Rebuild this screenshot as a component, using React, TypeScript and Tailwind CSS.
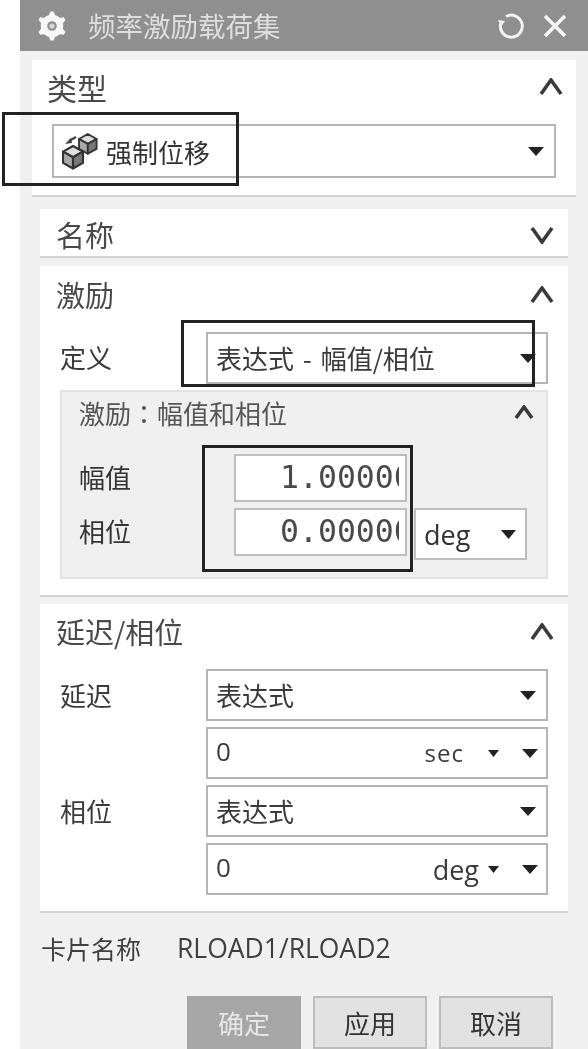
const FONT = "font-['Noto_Sans_CJK_SC','Noto_Sans',sans-serif]";

function Chevron({ up = true, w = 24, h = 18 }: { up?: boolean; w?: number; h?: number }) {
  return (
    <svg width={w} height={h} viewBox={`0 0 ${w} ${h}`} fill="none" className="shrink-0">
      <path
        d={up ? `M2 ${h - 2} L${w / 2} 2 L${w - 2} ${h - 2}` : `M2 2 L${w / 2} ${h - 2} L${w - 2} 2`}
        stroke="#3a3a3a"
        strokeWidth="3.6"
      />
    </svg>
  );
}

function Tri({ w = 16, h = 9 }: { w?: number; h?: number }) {
  return (
    <svg width={w} height={h} viewBox={`0 0 ${w} ${h}`} className="shrink-0">
      <path d={`M0 0 H${w} L${w / 2} ${h} Z`} fill="#222" />
    </svg>
  );
}

function Gear() {
  return (
    <svg width="30" height="30" viewBox="-15 -15 30 30" className="shrink-0">
      {[0, 60, 120, 180, 240, 300].map((a) => (
        <path key={a} d="M-3.4 -10 L-1.6 -14.6 H1.6 L3.4 -10 Z" fill="#f6f6f6" transform={`rotate(${a})`} />
      ))}
      <circle r="8" fill="none" stroke="#f6f6f6" strokeWidth="6.4" />
      <circle r="2.6" fill="#d6d6d6" />
    </svg>
  );
}

function Cube({ x, y, s }: { x: number; y: number; s: number }) {
  return (
    <g transform={`translate(${x} ${y}) scale(${s})`}>
      <path d="M8 0 L16 4.5 L8 9 L0 4.5 Z" fill="#dedede" stroke="#333" strokeWidth="1.7" strokeLinejoin="round" />
      <path d="M0 4.5 L8 9 V18 L0 13.5 Z" fill="#a8a8a8" stroke="#333" strokeWidth="1.7" strokeLinejoin="round" />
      <path d="M16 4.5 L8 9 V18 L16 13.5 Z" fill="#777" stroke="#333" strokeWidth="1.7" strokeLinejoin="round" />
    </g>
  );
}

function CubesIcon() {
  return (
    <svg width="36" height="38" viewBox="0 0 36 38" className="shrink-0">
      <path d="M7 9 L14 5" stroke="#444" strokeWidth="2.4" />
      <path d="M3 12 L9 6 L10 11 Z" fill="#444" />
      <Cube x={17} y={2} s={1.1} />
      <Cube x={1} y={14} s={1.25} />
    </svg>
  );
}

function Select({ children, className = "" }: { children: React.ReactNode; className?: string }) {
  return (
    <div className={`flex items-center justify-between border-2 border-[#b4b4b4] bg-white ${className}`}>
      {children}
    </div>
  );
}

function ExprRow({ text, className = "" }: { text: string; className?: string }) {
  return (
    <Select className={`h-[52px] pl-[8px] pr-[10px] text-[26px] text-[#3a3a3a] ${className}`}>
      <span className="mb-[2px] whitespace-nowrap [word-spacing:3px]">{text}</span>
      <Tri />
    </Select>
  );
}

function UnitRow({ unit, unitClass }: { unit: string; unitClass: string }) {
  return (
    <div className="flex h-[52px] items-center border-2 border-[#b4b4b4] bg-white pl-[8px] pr-[8px] text-[#3a3a3a]">
      <span className="mb-[5px] font-['Open_Sans',sans-serif] text-[26px] leading-none">0</span>
      <span className={`ml-auto whitespace-nowrap font-['Open_Sans',sans-serif] leading-none ${unitClass}`}>{unit}</span>
      <Tri w={11} h={7} />
      <span className="w-[23px]" />
      <Tri />
    </div>
  );
}

function NumField({ value, className = "" }: { value: string; className?: string }) {
  return (
    <div className={`flex h-[48px] w-[173px] items-center border-2 border-[#bdbdbd] bg-white pl-[44px] pr-[6px] ${className}`}>
      <div className="flex-1 overflow-hidden whitespace-nowrap font-['DejaVu_Sans_Mono',monospace] text-[31.5px] leading-none text-[#4a4a4a]">
        {value}
      </div>
    </div>
  );
}

function Button({ label, primary = false }: { label: string; primary?: boolean }) {
  return (
    <div
      className={`flex h-[53px] w-[114px] items-center justify-center border-2 text-[26px] ${
        primary ? "border-[#a6a6a6] bg-[#a6a6a6] text-[#e6e6e6]" : "border-[#bcbcbc] bg-[#e1e1e1] text-[#333]"
      }`}
    >
      {label}
    </div>
  );
}

export default function App() {
  return (
    <div className={`relative h-[1049px] w-[588px] overflow-hidden bg-white ${FONT}`}>
      <div className="ml-5 flex h-full flex-col bg-[#f0f0f0] blur-[0.7px]">
        {/* title bar */}
        <div className="flex h-[51px] shrink-0 items-center bg-[#8f8f8f] pl-[17px] pr-[21px]">
          <Gear />
          <span className="ml-[21px] text-[27.5px] leading-none text-[#dedede]">频率激励载荷集</span>
          <svg width="28" height="28" viewBox="0 0 28 28" fill="none" className="ml-auto">
            <path d="M9 4.5 A11 11 0 1 1 3.5 12" stroke="#f2f2f2" strokeWidth="3" />
            <path d="M1 8 L8 9 L4 15 Z" fill="#f2f2f2" />
          </svg>
          <svg width="24" height="24" viewBox="0 0 24 24" fill="none" className="ml-[18px]">
            <path d="M2 2 L22 22 M22 2 L2 22" stroke="#f6f6f6" strokeWidth="3.6" />
          </svg>
        </div>

        <div className="flex flex-1 flex-col px-3 pt-[9px]">
          {/* 类型 */}
          <div className="h-[137px] border-b-2 border-[#d2d2d2] bg-white px-5">
            <div className="flex h-[64px] items-center justify-between pb-[10px] text-[30px] text-[#4a4a4a]">
              <span className="-ml-[5px]">类型</span>
              <span className="-mr-[7px]">
                <Chevron />
              </span>
            </div>
            <Select className="h-[54px] pl-[8px] pr-[10px]">
              <span className="flex items-center gap-[8px] text-[26px] text-[#333]">
                <CubesIcon />
                强制位移
              </span>
              <Tri />
            </Select>
          </div>

          <div className="mx-2 mt-3 flex flex-col">
            {/* 名称 */}
            <div className="flex h-[49px] items-center justify-between border-b-2 border-[#d2d2d2] bg-white pl-4 pr-[14px] pt-[4px] text-[29px] text-[#4a4a4a]">
              <span>名称</span>
              <Chevron up={false} />
            </div>

            {/* 激励 */}
            <div className="mt-[8px] h-[331px] border-b-2 border-[#d2d2d2] bg-white px-5">
              <div className="flex h-[66px] items-center justify-between pb-[8px] text-[29px] text-[#4a4a4a]">
                <span className="-ml-1">激励</span>
                <span className="mr-[-6px]">
                  <Chevron />
                </span>
              </div>
              <div className="flex items-center">
                <span className="mb-[3px] w-[146px] text-[26px] text-[#3a3a3a]">定义</span>
                <ExprRow text="表达式 - 幅值/相位" className="flex-1" />
              </div>
              <div className="mt-[6px] h-[189px] border-2 border-[#e2e2e2] bg-[#efefef] pl-[17px] pr-[12px]">
                <div className="flex h-[44px] items-center justify-between pb-[4px] text-[26px] text-[#555]">
                  <span>
                    激励
                    <span className="font-['Noto_Sans_CJK_TC',sans-serif]">：</span>
                    幅值和相位
                  </span>
                  <Chevron w={20} h={15} />
                </div>
                <div className="mt-[18px] flex items-center text-[26px] text-[#333]">
                  <span className="mb-[3px] w-[155px]">幅值</span>
                  <NumField value="1.00000" />
                </div>
                <div className="mt-[6px] flex items-start text-[26px] text-[#333]">
                  <span className="w-[155px] pt-[3px]">相位</span>
                  <NumField value="0.00000" />
                  <div className="ml-[7px] flex h-[52px] w-[113px] items-center justify-between border-2 border-[#bdbdbd] bg-white pl-[8px] pr-[9px]">
                    <span className="font-['Open_Sans',sans-serif] text-[27px] leading-none text-[#333]">deg</span>
                    <Tri w={15} h={9} />
                  </div>
                </div>
              </div>
            </div>

            {/* 延迟/相位 */}
            <div className="mt-[7px] h-[309px] border-b-2 border-[#d2d2d2] bg-white px-5">
              <div className="flex h-[64px] items-center justify-between pb-[8px] text-[29px] text-[#4a4a4a]">
                <span className="-ml-1">延迟/相位</span>
                <span className="mr-[-6px]">
                  <Chevron />
                </span>
              </div>
              <div className="mt-px grid grid-cols-[146px_1fr] items-center gap-y-[6px] text-[26px] text-[#3a3a3a]">
                <span className="mb-[2px]">延迟</span>
                <ExprRow text="表达式" />
                <span />
                <UnitRow unit="sec" unitClass="mr-[24px] text-[24px] tracking-[1px]" />
                <span className="mb-[2px]">相位</span>
                <ExprRow text="表达式" />
                <span />
                <UnitRow unit="deg" unitClass="mr-[9px] text-[27px]" />
              </div>
            </div>
          </div>

          {/* footer */}
          <div className="mt-[17px] ml-[9px] flex items-center text-[#3f3f3f]">
            <span className="text-[25px] leading-[36px]">卡片名称</span>
            <span className="ml-[36px] font-['Open_Sans',sans-serif] text-[26.5px] leading-[36px]">RLOAD1/RLOAD2</span>
          </div>
          <div className="mt-[30px] flex gap-[12px] pl-[155px]">
            <Button label="确定" primary />
            <Button label="应用" />
            <Button label="取消" />
          </div>
        </div>
      </div>

      {/* annotation frames */}
      <div className="absolute left-[2px] top-[112px] h-[74px] w-[237px] border-[3px] border-[#222]" />
      <div className="absolute left-[181px] top-[320px] h-[67px] w-[354px] border-[3px] border-[#222]" />
      <div className="absolute left-[202px] top-[445px] h-[127px] w-[211px] border-[3px] border-[#222]" />
    </div>
  );
}
